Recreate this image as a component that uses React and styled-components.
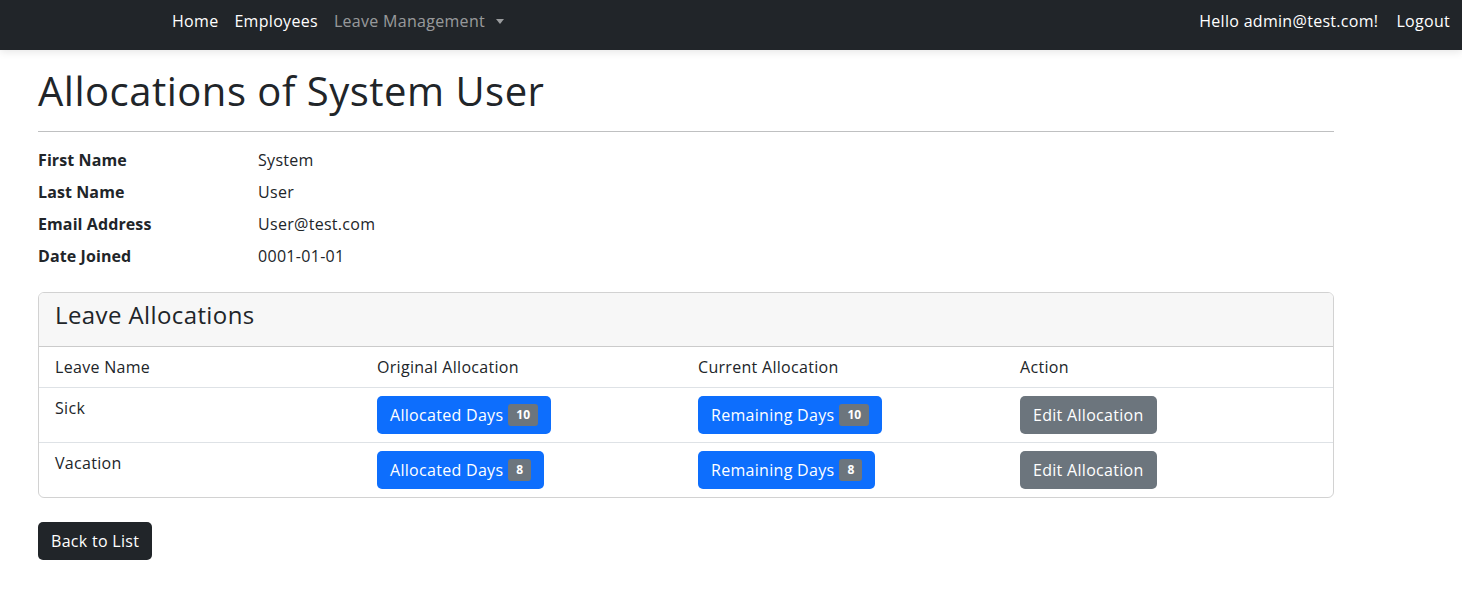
import React from "react";
import styled, { createGlobalStyle } from "styled-components";

const GlobalStyle = createGlobalStyle`
  * { box-sizing: border-box; }
  body {
    margin: 0;
    font-family: "Open Sans", "Noto Sans", sans-serif;
    font-size: 16px;
    line-height: 1.5;
    letter-spacing: 0.3px;
    color: #212529;
    background: #fff;
  }
`;

const Navbar = styled.nav`
  height: 50px;
  background: #212529;
  display: flex;
  align-items: flex-start;
  justify-content: space-between;
  padding: 1px 4px 0 164px;
  box-shadow: 0 2px 8px rgba(0, 0, 0, 0.1);
`;

const NavList = styled.div`
  display: flex;
  align-items: center;
`;

const NavLink = styled.a`
  padding: 8px;
  margin-left: ${(p) => (p.$spaced ? "2px" : "0")};
  color: ${(p) => (p.$muted ? "rgba(255,255,255,0.55)" : "#fff")};
  text-decoration: none;
  display: flex;
  align-items: center;
  gap: 8px;
`;

const Caret = styled.span`
  width: 0;
  height: 0;
  border-top: 5px solid currentColor;
  border-left: 4.5px solid transparent;
  border-right: 4.5px solid transparent;
  margin-left: 3px;
`;

const Main = styled.main`
  padding: 0 128px 0 38px;
`;

const Title = styled.h1`
  font-size: 40px;
  font-weight: 400;
  line-height: 1.2;
  margin: 17px 0 0;
  letter-spacing: 0.5px;
`;

const Rule = styled.hr`
  border: 0;
  border-top: 1px solid #bfc0c1;
  margin: 16px 0 16px;
`;

const DetailList = styled.dl`
  display: grid;
  grid-template-columns: 220px 1fr;
  row-gap: 8px;
  margin: 0 0 24px;
`;

const Term = styled.dt`
  font-weight: 700;
  letter-spacing: 0.1px;
`;

const Desc = styled.dd`
  margin: 0;
`;

const Card = styled.section`
  border: 1px solid rgba(0, 0, 0, 0.175);
  border-radius: 6px;
  overflow: hidden;
`;

const CardHeader = styled.div`
  background: #f7f7f7;
  padding: 8px 16px;
  border-bottom: 1px solid rgba(0, 0, 0, 0.175);
`;

const CardTitle = styled.h4`
  font-size: 24px;
  font-weight: 400;
  line-height: 1.2;
  margin: 0 0 8px;
  letter-spacing: 0.4px;
`;

const Table = styled.table`
  width: 100%;
  border-collapse: collapse;
  table-layout: fixed;
`;

const Cell = styled.td`
  width: ${(p) => (p.$w ? `${p.$w}px` : "auto")};
  padding: 8px 16px;
  vertical-align: top;
  text-align: left;
  font-weight: 400;
  border-bottom: ${(p) => (p.$last ? "none" : "1px solid #dee2e6")};
`;

const Button = styled.a`
  display: inline-flex;
  align-items: center;
  gap: 5px;
  height: 38px;
  padding: 0 13px;
  border-radius: 5px;
  color: #fff;
  text-decoration: none;
  background: ${(p) =>
    p.$variant === "secondary" ? "#6c757d" : p.$variant === "dark" ? "#212529" : "#0d6efd"};
`;

const Badge = styled.span`
  background: #6c757d;
  color: #fff;
  font-size: 12px;
  font-weight: 700;
  line-height: 1;
  letter-spacing: 0;
  padding: 5px 8px;
  border-radius: 3px;
`;

const Footer = styled.div`
  margin-top: 24px;
`;

const rows = [
  { name: "Sick", original: 10, current: 10 },
  { name: "Vacation", original: 8, current: 8 },
];

export default function App() {
  return (
    <>
      <GlobalStyle />
      <Navbar>
        <NavList>
          <NavLink href="#">Home</NavLink>
          <NavLink href="#">Employees</NavLink>
          <NavLink href="#" $muted>
            Leave Management <Caret />
          </NavLink>
        </NavList>
        <NavList>
          <NavLink href="#">Hello admin@test.com!</NavLink>
          <NavLink href="#" $spaced>
            Logout
          </NavLink>
        </NavList>
      </Navbar>
      <Main>
        <Title>Allocations of System User</Title>
        <Rule />
        <DetailList>
          <Term>First Name</Term>
          <Desc>System</Desc>
          <Term>Last Name</Term>
          <Desc>User</Desc>
          <Term>Email Address</Term>
          <Desc>User@test.com</Desc>
          <Term>Date Joined</Term>
          <Desc>0001-01-01</Desc>
        </DetailList>
        <Card>
          <CardHeader>
            <CardTitle>Leave Allocations</CardTitle>
          </CardHeader>
          <Table>
            <thead>
              <tr>
                <Cell as="th" $w={322}>Leave Name</Cell>
                <Cell as="th" $w={321}>Original Allocation</Cell>
                <Cell as="th" $w={322}>Current Allocation</Cell>
                <Cell as="th">Action</Cell>
              </tr>
            </thead>
            <tbody>
              {rows.map((r, i) => {
                const last = i === rows.length - 1;
                return (
                  <tr key={r.name}>
                    <Cell $last={last}>{r.name}</Cell>
                    <Cell $last={last}>
                      <Button href="#">
                        Allocated Days <Badge>{r.original}</Badge>
                      </Button>
                    </Cell>
                    <Cell $last={last}>
                      <Button href="#">
                        Remaining Days <Badge>{r.current}</Badge>
                      </Button>
                    </Cell>
                    <Cell $last={last}>
                      <Button href="#" $variant="secondary">
                        Edit Allocation
                      </Button>
                    </Cell>
                  </tr>
                );
              })}
            </tbody>
          </Table>
        </Card>
        <Footer>
          <Button href="#" $variant="dark">
            Back to List
          </Button>
        </Footer>
      </Main>
    </>
  );
}
